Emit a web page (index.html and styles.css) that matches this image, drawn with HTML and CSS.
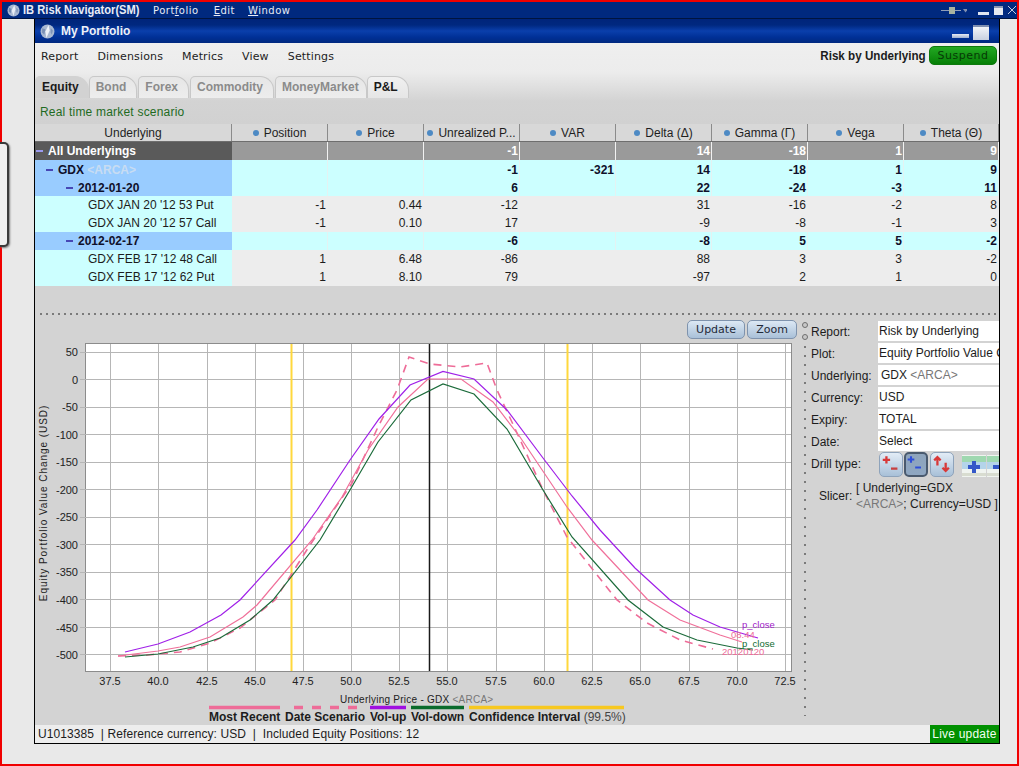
FILE: index.html
```html
<!DOCTYPE html>
<html lang="en">
<head>
<meta charset="utf-8">
<title>IB Risk Navigator</title>
<link rel="stylesheet" href="styles.css">
</head>
<body>
<div class="desktop">
  <header class="appbar">
    <svg class="globe" viewBox="0 0 14 14"><circle cx="7" cy="7" r="6.5" fill="#a9b8d2"/><path d="M8 1l1 5-2 7-2-6z" fill="#e8edf5"/><path d="M2 4l3 1-1 5-2-2z" fill="#6f88b0"/><path d="M10 4l2 2-1 4-1-2z" fill="#7d93b8"/></svg>
    <span class="appname">IB Risk Navigator(SM)</span>
    <nav class="appmenu">
      <span>Port<u>f</u>olio</span><span><u>E</u>dit</span><span><u>W</u>indow</span>
    </nav>
    <div class="appctl">
      <svg class="pin" viewBox="0 0 26 9"><path d="M0 4.500h8M14 4.500h6" stroke="#8f9db8" fill="none"/><rect x="8" y="1" width="6" height="7" fill="#a8b2a0"/><path d="M22 3h5l-2.500 3.500z" fill="#7f8fb0"/></svg>
      <span class="ctl-min"></span><span class="ctl-max"></span>
      <svg class="ctl-close" viewBox="0 0 10 10"><path d="M1 1l8 8M9 1l-8 8" stroke="#c4cde0" fill="none"/></svg>
    </div>
  </header>

  <div class="sidegrip"></div>

  <div class="workspace">
    <main class="window">
      <div class="wintitle">
        <svg class="globe big" viewBox="0 0 14 14"><circle cx="7" cy="7" r="6.5" fill="#a8b8d2"/><path d="M8 1l1 5-3 7-1-6z" fill="#eef2f8"/><path d="M2 4l3 1-1 5-2-2z" fill="#7a90b6"/><path d="M10 4l2 2-1 4-1-2z" fill="#7d93b8"/></svg>
        <span class="wintitle-text">My Portfolio</span>
        <span class="win-min"></span><span class="win-max"></span>
      </div>

      <div class="head">
        <div class="menubar">
          <nav class="menus"><span>Report</span><span>Dimensions</span><span>Metrics</span><span>View</span><span>Settings</span></nav>
          <div class="menubar-right"><b class="reportname">Risk by Underlying</b><button class="suspend">Suspend</button></div>
        </div>
        <div class="tabs">
          <span class="tab tab-current">Equity</span>
          <span class="tab">Bond</span>
          <span class="tab">Forex</span>
          <span class="tab">Commodity</span>
          <span class="tab">MoneyMarket</span>
          <span class="tab tab-on">P&amp;L</span>
        </div>
        <div class="scenario">Real time market scenario</div>
      </div>

      <div class="grid">
        <div class="row row-head">
          <span class="cell first">Underlying</span>
          <span class="cell"><i class="dot"></i>Position</span>
          <span class="cell"><i class="dot"></i>Price</span>
          <span class="cell"><i class="dot"></i>Unrealized P...</span>
          <span class="cell"><i class="dot"></i>VAR</span>
          <span class="cell"><i class="dot"></i>Delta (Δ)</span>
          <span class="cell"><i class="dot"></i>Gamma (Γ)</span>
          <span class="cell"><i class="dot"></i>Vega</span>
          <span class="cell"><i class="dot"></i>Theta (Θ)</span>
        </div>
        <div class="row row-all">
          <span class="cell first lvl0"><i class="minus"></i>All Underlyings</span>
          <span class="cell"></span><span class="cell"></span><span class="cell">-1</span><span class="cell"></span><span class="cell">14</span><span class="cell">-18</span><span class="cell">1</span><span class="cell">9</span>
        </div>
        <div class="row row-group row-low">
          <span class="cell first lvl1"><i class="minus"></i>GDX <em>&lt;ARCA&gt;</em></span>
          <span class="cell"></span><span class="cell"></span><span class="cell">-1</span><span class="cell">-321</span><span class="cell">14</span><span class="cell">-18</span><span class="cell">1</span><span class="cell">9</span>
        </div>
        <div class="row row-group row-low">
          <span class="cell first lvl2"><i class="minus"></i>2012-01-20</span>
          <span class="cell"></span><span class="cell"></span><span class="cell">6</span><span class="cell"></span><span class="cell">22</span><span class="cell">-24</span><span class="cell">-3</span><span class="cell">11</span>
        </div>
        <div class="row row-leaf">
          <span class="cell first lvl3">GDX JAN 20 '12 53 Put</span>
          <span class="cell">-1</span><span class="cell">0.44</span><span class="cell">-12</span><span class="cell"></span><span class="cell">31</span><span class="cell">-16</span><span class="cell">-2</span><span class="cell">8</span>
        </div>
        <div class="row row-leaf">
          <span class="cell first lvl3">GDX JAN 20 '12 57 Call</span>
          <span class="cell">-1</span><span class="cell">0.10</span><span class="cell">17</span><span class="cell"></span><span class="cell">-9</span><span class="cell">-8</span><span class="cell">-1</span><span class="cell">3</span>
        </div>
        <div class="row row-group">
          <span class="cell first lvl2"><i class="minus"></i>2012-02-17</span>
          <span class="cell"></span><span class="cell"></span><span class="cell">-6</span><span class="cell"></span><span class="cell">-8</span><span class="cell">5</span><span class="cell">5</span><span class="cell">-2</span>
        </div>
        <div class="row row-leaf">
          <span class="cell first lvl3">GDX FEB 17 '12 48 Call</span>
          <span class="cell">1</span><span class="cell">6.48</span><span class="cell">-86</span><span class="cell"></span><span class="cell">88</span><span class="cell">3</span><span class="cell">3</span><span class="cell">-2</span>
        </div>
        <div class="row row-leaf">
          <span class="cell first lvl3">GDX FEB 17 '12 62 Put</span>
          <span class="cell">1</span><span class="cell">8.10</span><span class="cell">79</span><span class="cell"></span><span class="cell">-97</span><span class="cell">2</span><span class="cell">1</span><span class="cell">0</span>
        </div>
      </div>

      <div class="sash"><div class="sash-dots"></div></div>

      <section class="lower">
        <div class="chartcol">
          <div class="charttools"><button class="toolbtn btn-update">Update</button><button class="toolbtn btn-zoom">Zoom</button></div>
          <svg class="chart" viewBox="35 343 768 382" width="768" height="382">
            <rect x="85.5" y="343.5" width="706" height="328" fill="#fff" stroke="#8c8c8c"/>
            <g class="gridlines">
              <path d="M110.5 344V671M158.5 344V671M207 344V671M255.5 344V671M303.5 344V671M351.5 344V671M399.5 344V671M447.5 344V671M496.5 344V671M544.5 344V671M592.5 344V671M640.5 344V671M689 344V671M737.5 344V671M785.5 344V671"/>
              <path d="M80 352.5H791M80 379.5H791M80 407.5H791M80 434.5H791M80 462.5H791M80 489.5H791M80 517.5H791M80 544.5H791M80 572.5H791M80 599.5H791M80 627.5H791M80 654.5H791"/>
            </g>
            <path d="M291.5 344V671M567.5 344V671" class="limit"/>
            <path d="M429.5 344V671" class="spot"/>
            <polyline class="curve dashed" points="118,656 147,655 180,652 210,643 240,628 275,600 310,545 352,483 378,427 397,390 409,357 430,364 460,367 487,363 497,390 517,433 543,490 567,537 617,600 647,623 680,640 713,649"/>
            <polyline class="curve recent" points="118,656 158,651 180,647 210,637 243,617 257,605 312,540 342,497 368,450 398,407 428,379 461,379 493,402 520,437 567,507 592,540 648,600 680,620 720,635 742,642"/>
            <polyline class="curve volup" points="125,652 158,644 190,632 221,615 240,600 295,540 317,510 350,460 379,419 410,385 443,371.5 474,379 507,410 543,458 572,496 600,530 635,568 670,600 693,615 720,627 758,638"/>
            <polyline class="curve voldown" points="125,657 158,654 193,647 220,638 250,620 273,600 320,540 350,490 378,442 411,400 443,384 474,394 507,429 543,490 572,537 628,600 663,627 697,640 737,648 753,650"/>
            <g class="curvelabels">
              <text x="742" y="628" class="c-up">p_close</text>
              <text x="731" y="638" class="c-pink">08.44</text>
              <text x="742" y="647" class="c-down">p_close</text>
              <text x="722" y="655" class="c-pink">20120120</text>
            </g>
            <g class="ylabels">
              <text x="78" y="356">50</text><text x="78" y="384">0</text><text x="78" y="411">-50</text><text x="78" y="439">-100</text><text x="78" y="466">-150</text><text x="78" y="494">-200</text><text x="78" y="521">-250</text><text x="78" y="549">-300</text><text x="78" y="576">-350</text><text x="78" y="604">-400</text><text x="78" y="632">-450</text><text x="78" y="659">-500</text>
            </g>
            <g class="xlabels">
              <text x="110" y="685">37.5</text><text x="158" y="685">40.0</text><text x="207" y="685">42.5</text><text x="255" y="685">45.0</text><text x="303" y="685">47.5</text><text x="351" y="685">50.0</text><text x="399" y="685">52.5</text><text x="447" y="685">55.0</text><text x="496" y="685">57.5</text><text x="544" y="685">60.0</text><text x="592" y="685">62.5</text><text x="640" y="685">65.0</text><text x="689" y="685">67.5</text><text x="737" y="685">70.0</text><text x="785" y="685">72.5</text>
            </g>
            <text class="ytitle" transform="translate(47 503) rotate(-90)">Equity Portfolio Value Change (USD)</text>
            <text class="xtitle" x="340" y="703">Underlying Price - GDX <tspan class="muted">&lt;ARCA&gt;</tspan></text>
            <path class="lg lg-recent" d="M209 707.5H280"/>
            <path class="lg lg-date" d="M294 707.5H362"/>
            <path class="lg lg-up" d="M370 707.5H406"/>
            <path class="lg lg-down" d="M411 707.5H464"/>
            <path class="lg lg-conf" d="M469 707.5H624"/>
            <g class="legend">
              <text x="209" y="721">Most Recent</text>
              <text x="285" y="721">Date Scenario</text>
              <text x="370" y="721">Vol-up</text>
              <text x="411" y="721">Vol-down</text>
              <text x="469" y="721">Confidence Interval <tspan class="legend-note">(99.5%)</tspan></text>
            </g>
          </svg>
        </div>

        <div class="vsplit"><i class="knob"></i><i class="knob"></i></div>

        <aside class="panel">
          <div class="field"><span class="lbl">Report:</span><span class="val">Risk by Underlying</span></div>
          <div class="field"><span class="lbl">Plot:</span><span class="val">Equity Portfolio Value Change</span></div>
          <div class="field"><span class="lbl">Underlying:</span><span class="val val-in">GDX <em class="muted-html">&lt;ARCA&gt;</em></span></div>
          <div class="field"><span class="lbl">Currency:</span><span class="val">USD</span></div>
          <div class="field"><span class="lbl">Expiry:</span><span class="val">TOTAL</span></div>
          <div class="field"><span class="lbl">Date:</span><span class="val">Select</span></div>
          <div class="field drill"><span class="lbl">Drill type:</span>
            <div class="drillbtns">
              <span class="dbtn"><svg viewBox="0 0 24 24"><path d="M3 7h8M7 3v8" stroke="#d83838" stroke-width="2.500" fill="none"/><path d="M12 16.500h7" stroke="#c84040" stroke-width="2.500" fill="none"/></svg></span>
              <span class="dbtn dbtn-on"><svg viewBox="0 0 24 24"><path d="M2 6h8M6 2v8M11 15.500h7" stroke="#2f4fd8" stroke-width="2.500" fill="none"/></svg></span>
              <span class="dbtn"><svg viewBox="0 0 24 24"><path d="M7 13V4M3.500 7.500L7 4l3.500 3.500" stroke="#d83838" stroke-width="2.500" fill="none"/><path d="M16 10v9M12.500 15.500L16 19l3.500-3.500" stroke="#d83838" stroke-width="2.500" fill="none"/></svg></span>
              <span class="pic"><svg viewBox="0 0 24 22"><rect width="24" height="22" fill="#f0f4f0"/><rect y="1" width="24" height="6" fill="#9fd8b0"/><rect y="7" width="24" height="7" fill="#b4d4ea"/><rect y="18" width="24" height="3" fill="#d8dcd0"/><path d="M12 6v12M6 12h12" stroke="#3458c8" stroke-width="4"/></svg></span>
              <span class="pic"><svg viewBox="0 0 24 22"><rect width="24" height="22" fill="#f0f4f0"/><rect y="1" width="24" height="6" fill="#9fd8b0"/><rect y="7" width="24" height="7" fill="#b4d4ea"/><rect y="18" width="24" height="3" fill="#d8dcd0"/><path d="M6 12h12" stroke="#3458c8" stroke-width="4"/></svg></span>
            </div>
          </div>
          <div class="slicer"><span class="slicer-lbl">Slicer:</span><span class="slicer-val">[ Underlying=GDX<br><em class="muted-html">&lt;ARCA&gt;</em>; Currency=USD ]</span></div>
        </aside>
      </section>

      <footer class="status">
        <span>U1013385&nbsp; | Reference currency: USD&nbsp; |&nbsp; Included Equity Positions: 12</span>
        <span class="live">Live update</span>
      </footer>
    </main>
  </div>
</div>
</body>
</html>
```

FILE: styles.css
```css
* { box-sizing: border-box; }
html, body { margin: 0; padding: 0; }
body { width: 1019px; height: 766px; overflow: hidden; font-family: "Liberation Sans", Arial, sans-serif; font-size: 12px; color: #1c1c1c; }

.desktop { position: relative; width: 1019px; height: 766px; border: 2px solid #f00000; background: #e9e9e9; display: flex; flex-direction: column; }

.appbar { height: 17px; flex: none; background: #00297f; border-bottom: 1px solid #00143f; display: flex; align-items: center; color: #e8ecf5; padding-left: 5px; }
.globe { width: 13px; height: 13px; flex: none; }
.globe.big { width: 15px; height: 15px; }
.appname { margin-left: 3px; font-weight: bold; font-size: 12px; transform: scaleX(.93); transform-origin: left; white-space: nowrap; width: 118px; }
.appmenu { display: flex; font-family: "DejaVu Sans", sans-serif; font-size: 10px; margin-left: 12px; letter-spacing: .5px; }
.appmenu span { margin-right: 13px; white-space: nowrap; }
.appmenu span:first-child { margin-right: 15px; }
.appctl { margin-left: auto; display: flex; align-items: center; height: 100%; padding-right: 0; }
.pin { width: 26px; height: 9px; margin-right: 11px; }
.ctl-min { width: 11px; height: 3px; background: #dfe5f0; margin: 6px 5px 0 0; }
.ctl-max { width: 9px; height: 9px; background: linear-gradient(#8b98b4 2px, #e6e9f0 2px); margin-right: 4px; }
.ctl-close { width: 10px; height: 10px; }

.sidegrip { position: absolute; left: -2px; top: 140px; width: 9px; height: 105px; background: #efefef; border: 2px solid #3a3a3a; border-left: 0; border-radius: 0 5px 5px 0; box-shadow: 1px 1px 2px #777; }

.workspace { flex: 1; display: flex; padding-left: 32px; min-height: 0; }
.window { width: 966px; height: 725px; border: 1px solid #000; border-top: 0; display: flex; flex-direction: column; background: #d3d3d3; overflow: hidden; }

.wintitle { height: 24px; flex: none; display: flex; align-items: center; padding: 0 5px 0 5px; background: linear-gradient(#00247a 0, #00287f 25%, #0a3fac 50%, #003097 75%, #00287f 100%); color: #eef1f8; }
.wintitle-text { font-weight: bold; margin-left: 6px; }
.win-min { margin-left: auto; width: 17px; height: 4px; margin-top: 9px; margin-right: 4px; background: linear-gradient(#e8ecf5, #9fb0cf); }
.win-max { width: 16px; height: 15px; margin-right: 5px; margin-top: 2px; background: linear-gradient(#7e8eb0 2px, #f2f4f8 2px, #c8d0e0); }

.head { height: 81px; flex: none; background: linear-gradient(#efefef 0, #ececec 36%, #d3d3d3 72%, #d1d1d1 100%); display: flex; flex-direction: column; }
.menubar { height: 33px; flex: none; display: flex; justify-content: space-between; padding: 3px 2px 0 6px; }
.menus { display: flex; font-family: "DejaVu Sans", sans-serif; font-size: 11px; gap: 19px; padding-top: 4px; letter-spacing: .15px; }
.menubar-right { display: flex; align-items: flex-start; gap: 3px; }
.reportname { font-size: 12px; padding-top: 3px; transform: scaleX(.97); transform-origin: right; }
.suspend { width: 68px; height: 19px; padding: 0; border: 1px solid #0d7a0d; border-radius: 5px; background: linear-gradient(#23a823, #067f06); color: #063a06; font-family: "DejaVu Sans", sans-serif; font-size: 11px; letter-spacing: .5px; }

.tabs { display: flex; height: 22px; flex: none; font-weight: bold; color: #8b8b8b; }
.tab { padding: 3px 10px 0 6px; margin-right: 1px; background: linear-gradient(#e6e6e6, #ededed); border: 1px solid #c8c8c8; border-bottom: 0; border-radius: 5px 14px 0 0; white-space: nowrap; }
.tab-current { color: #1a1a1a; background: #d2d2d2; border-color: #d2d2d2; padding: 3px 9px 0 6px; margin-right: 0; }
.tab:nth-child(5) { padding-right: 7px; margin-right: 0; }
.tab-on { color: #1a1a1a; background: linear-gradient(#f0f0f0, #e6e6e6); }
.scenario { color: #1f6b1f; padding: 7px 0 0 5px; font-size: 12px; letter-spacing: .2px; }

.grid { flex: none; }
.row { display: grid; grid-template-columns: 197px repeat(7, 96px) 95px; height: 18px; }
.cell { display: block; padding: 2px 1px 0 0; text-align: right; border-right: 1px solid transparent; white-space: nowrap; overflow: hidden; line-height: 15px; }
.cell.first { text-align: left; }
.row-low .cell { padding-top: 3px; }
.row-head { height: 18px; background: #d8d8d8; color: #1f1f1f; border-bottom: 1px solid #6e6e6e; }
.row-head .cell { text-align: center; border-right: 1px solid #8b8b8b; padding: 2px 0 0; }
.row-head .cell.first { text-align: center; }
.dot { display: inline-block; width: 6px; height: 6px; border-radius: 50%; background: #4d8ac4; margin-right: 5px; vertical-align: 1px; }
.row-all .cell { background: #9a9a9a; color: #fff; font-weight: bold; border-right-color: #f2f2f2; }
.row-all .first { background: #5a5a5a; border-right-color: #5a5a5a; }
.row-group .cell { background: #ccffff; color: #10102a; font-weight: bold; border-right-color: #e4f2f2; }
.row-group .first { background: #99ccff; border-right-color: #99ccff; }
.row-group em { color: #c8dcf2; font-style: normal; font-weight: bold; }
.row-leaf .cell { background: #ededed; border-right-color: #ededed; }
.row-leaf .first { background: #ccffff; border-right-color: #ccffff; }
.minus { display: inline-block; width: 7px; height: 2px; background: #4747b5; margin-right: 5px; vertical-align: 3px; }
.row-all .minus { background: #9a9aee; }
.lvl0 { padding-left: 1px; }
.lvl1 { padding-left: 11px; }
.lvl2 { padding-left: 31px; }
.lvl3 { padding-left: 53px; }

.sash { height: 32px; flex: none; padding: 27px 0 0 5px; }
.sash-dots { height: 2px; background: repeating-linear-gradient(to right, #7a7a7a 0 2px, transparent 2px 6px); }

.lower { flex: 1; min-height: 0; display: flex; }
.chartcol { width: 768px; flex: none; display: flex; flex-direction: column; }
.charttools { height: 25px; flex: none; display: flex; justify-content: flex-end; gap: 2px; padding: 2px 6px 0 0; }
.toolbtn { height: 19px; padding: 0; border: 1px solid #7f93ad; border-radius: 5px; background: linear-gradient(#dce8f4, #a9c0d8); color: #1f2a38; font-family: "DejaVu Sans", sans-serif; font-size: 11px; }
.btn-update { width: 58px; }
.btn-zoom { width: 50px; }
.chart { display: block; flex: none; }
.gridlines path { stroke: #b6b6b6; stroke-width: 1; fill: none; shape-rendering: crispEdges; }
.limit { stroke: #ffd83c; stroke-width: 2; fill: none; }
.spot { stroke: #1a1a1a; stroke-width: 1.5; fill: none; }
.curve { fill: none; stroke-width: 1.2; }
.recent { stroke: #f0709a; }
.dashed { stroke: #ee6c98; stroke-width: 1.6; stroke-dasharray: 8 6; }
.volup { stroke: #a020e8; }
.voldown { stroke: #1b6b3a; }
.curvelabels text { font-size: 9.5px; }
.c-up { fill: #a020c8; }
.c-pink { fill: #ee6c98; }
.c-down { fill: #106b30; }
.ylabels text { font-size: 11px; text-anchor: end; fill: #222; }
.xlabels text { font-size: 11px; text-anchor: middle; fill: #222; }
.ytitle { font-size: 10px; letter-spacing: .95px; text-anchor: middle; fill: #222; }
.xtitle { font-size: 10px; letter-spacing: .25px; fill: #222; }
.muted { fill: #777; }
.lg { stroke-width: 3.500; fill: none; }
.lg-recent { stroke: #ee6c98; }
.lg-date { stroke: #ee6c98; stroke-dasharray: 9 9; }
.lg-up { stroke: #a010e0; }
.lg-down { stroke: #0a6b2c; }
.lg-conf { stroke: #f7c820; }
.legend text { font-size: 12px; font-weight: bold; fill: #1c1c1c; }
.legend-note { font-weight: normal; fill: #444; }

.vsplit { width: 7px; flex: none; margin-top: 4px; margin-left: -1px; margin-right: 1px; height: 394px; background: repeating-linear-gradient(to bottom, #7a7a7a 0 2px, transparent 2px 9px) 2px 24px / 2px 100% no-repeat; display: flex; flex-direction: column; align-items: flex-start; gap: 6px; }
.knob { width: 6px; height: 6px; border-radius: 50%; border: 1px solid #6f6f6f; background: #c8c8c8; }

.panel { flex: 1; min-width: 0; padding: 3px 0 0 1px; overflow: hidden; display: flex; flex-direction: column; }
.field { display: grid; grid-template-columns: 67px 1fr; height: 22px; align-items: start; min-width: 0; }
.lbl { padding-top: 4px; white-space: nowrap; }
.val { height: 20px; background: #fff; padding: 3px 0 0 1px; white-space: nowrap; overflow: hidden; }
.val-in { padding-left: 3px; }
.muted-html { font-style: normal; color: #777; }
.drill { height: 26px; }
.drillbtns { display: flex; gap: 1px; overflow: hidden; padding-left: 1px; margin-top: -1px; height: 25px; }
.dbtn { width: 24px; height: 25px; flex: none; border: 1px solid #8ea3bb; border-radius: 5px; background: linear-gradient(#e2ecf6, #a8c0d8); }
.dbtn svg, .pic svg { display: block; width: 100%; height: 100%; }
.dbtn-on { background: linear-gradient(#8ea4bc, #8fa7c2); border: 2px solid #4a5a6e; }
.dbtn:nth-child(3) { margin-right: 7px; margin-left: 1px; }
.pic { width: 24px; height: 22px; flex: none; margin-top: 3px; }
.slicer { display: flex; padding: 1px 0 0 8px; align-items: center; }
.slicer-lbl { width: 37px; flex: none; }
.slicer-val { line-height: 16px; white-space: nowrap; }

.status { height: 18px; flex: none; background: #ededed; display: flex; justify-content: space-between; }
.status > span:first-child { padding: 2px 0 0 3px; letter-spacing: .08px; }
.live { width: 69px; background: #009000; color: #f2fff2; text-align: center; padding-top: 2px; letter-spacing: .2px; }
```
